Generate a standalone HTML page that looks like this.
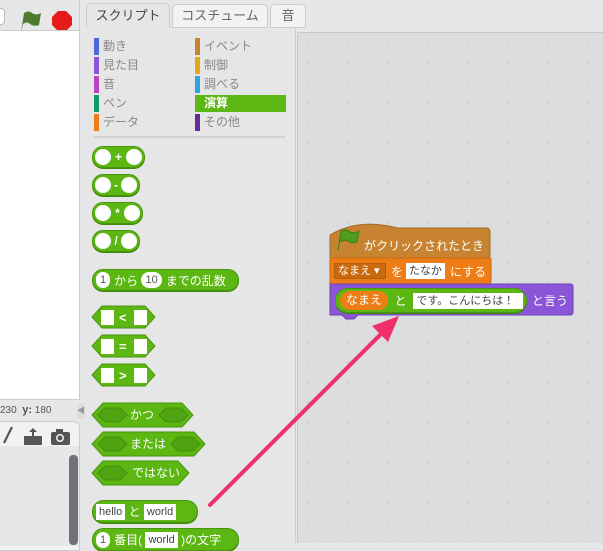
<!DOCTYPE html>
<html><head><meta charset="utf-8"><style>
*{margin:0;padding:0;box-sizing:border-box}
body{width:603px;height:543px;overflow:hidden;background:#e6e7e8;position:relative;font-family:"Liberation Sans","Noto Sans CJK JP",sans-serif}
.a{position:absolute}
.cat{position:absolute;font-size:12px;color:#888;height:17px;line-height:17px;padding-left:9px}
.cat i{position:absolute;left:0;top:0;width:5px;height:17px}
.rep{position:absolute;background:#5cb712;border:1px solid #4a9510;border-radius:12px;color:#fff;font-size:12px;display:flex;align-items:center;padding:0 3px;box-shadow:0 1px 0 #3f8a0e;white-space:nowrap}
.rep>span{flex-shrink:0}
.sm{padding:0 2px}
.c{width:16px;height:16px;border-radius:8px;background:#fff;display:inline-block}
.op{display:inline-block;width:14px;text-align:center;font-weight:bold}
.num{background:#fff;color:#555;border-radius:8px;height:16px;line-height:16px;padding:0 4px;font-size:11px;margin-right:4px}
.box{background:#fff;color:#444;height:16px;line-height:16px;padding:0 3px;font-size:11px;white-space:nowrap}
</style></head><body>
<div class="a" style="left:0;top:0;width:80px;height:30px;background:#e6e7e8;border-right:1px solid #ccc"></div>
<div class="a" style="left:0;top:8px;width:5px;height:17px;border:1px solid #bbb;border-left:none;border-radius:0 4px 4px 0;background:#fff"></div>
<svg class="a" style="left:18px;top:9px" width="24" height="24" viewBox="0 0 24 22"><path d="M3 22 L6 3 Q11 0 14 3 Q18 6 23 3 L21 15 Q16 17 12 14 Q9 11 5 14 L3 22Z" fill="#4e7c2e"/></svg>
<svg class="a" style="left:51px;top:10px" width="22" height="22"><polygon points="7,1 15,1 21,7 21,15 15,21 7,21 1,15 1,7" fill="#e61a1a"/></svg>
<div class="a" style="left:0;top:30px;width:80px;height:370px;background:#fff;border:1px solid #ccc;border-left:none"></div>
<div class="a" style="left:0;top:404px;font-size:10px;color:#555">230 &nbsp;<b style="font-size:11px">y:</b> 180</div>
<div class="a" style="left:77px;top:403px;width:8px;height:16px;background:#ddd;border-radius:3px;color:#999;font-size:8px;line-height:16px">◀</div>
<div class="a" style="left:0;top:421px;width:80px;height:130px;background:#f2f2f2;border:1px solid #ccc;border-left:none;border-radius:0 6px 0 0"></div>
<div class="a" style="left:0;top:446px;width:79px;height:100px;background:#e6e7e8"></div>
<svg class="a" style="left:0;top:424px" width="80" height="22"><path d="M4 19 L12 3" stroke="#555" stroke-width="2.2"/><rect x="24" y="12" width="18" height="9" fill="#555"/><path d="M33 4 l-4 4 h3 v5 h2 v-5 h3z" fill="#555"/><rect x="51" y="8" width="19" height="13" rx="2" fill="#555"/><rect x="56" y="5" width="7" height="4" fill="#555"/><circle cx="60" cy="14" r="4" fill="#f2f2f2"/><circle cx="60" cy="14" r="2.5" fill="#555"/></svg>
<div class="a" style="left:69px;top:455px;width:9px;height:90px;background:#707174;border-radius:4px"></div>
<div class="a" style="left:86px;top:3px;width:84px;height:26px;background:#e6e6e6;border:1px solid #ccc;border-bottom:none;border-radius:5px 5px 0 0;font-size:13px;color:#444;text-align:center;line-height:24px">スクリプト</div>
<div class="a" style="left:172px;top:4px;width:96px;height:24px;background:#f2f2f2;border:1px solid #ccc;border-radius:5px 5px 0 0;font-size:13px;color:#666;text-align:center;line-height:22px">コスチューム</div>
<div class="a" style="left:270px;top:4px;width:36px;height:24px;background:#f2f2f2;border:1px solid #ccc;border-radius:5px 5px 0 0;font-size:13px;color:#666;text-align:center;line-height:22px">音</div>
<div class="a" style="left:85px;top:28px;width:211px;height:515px;background:#e6e6e6;border-right:1px solid #ccc"></div>
<div class="cat" style="left:94px;top:38px"><i style="background:#4a6cd4"></i>動き</div>
<div class="cat" style="left:94px;top:57px"><i style="background:#8a55d7"></i>見た目</div>
<div class="cat" style="left:94px;top:76px"><i style="background:#bb42c3"></i>音</div>
<div class="cat" style="left:94px;top:95px"><i style="background:#0e9a6c"></i>ペン</div>
<div class="cat" style="left:94px;top:114px"><i style="background:#ee7d16"></i>データ</div>
<div class="cat" style="left:195px;top:38px"><i style="background:#c88330"></i>イベント</div>
<div class="cat" style="left:195px;top:57px"><i style="background:#e1a91a"></i>制御</div>
<div class="cat" style="left:195px;top:76px"><i style="background:#2ca5e2"></i>調べる</div>
<div class="cat" style="left:195px;top:95px;width:91px;background:#5cb712;color:#fff;font-weight:bold"><i style="background:#5cb712"></i>演算</div>
<div class="cat" style="left:195px;top:114px"><i style="background:#632d99"></i>その他</div>
<div class="a" style="left:94px;top:136px;width:191px;height:2px;background:#d0d0d0"></div>
<div class="rep sm" style="left:92px;top:146px;height:22px"><span class="c"></span><span class="op" style="width:15px">+</span><span class="c"></span></div>
<div class="rep sm" style="left:92px;top:174px;height:22px"><span class="c"></span><span class="op" style="width:10px">-</span><span class="c"></span></div>
<div class="rep sm" style="left:92px;top:202px;height:22px"><span class="c"></span><span class="op" style="width:13px">*</span><span class="c"></span></div>
<div class="rep sm" style="left:92px;top:230px;height:22px"><span class="c"></span><span class="op" style="width:10px">/</span><span class="c"></span></div>
<div class="rep" style="left:92px;top:269px;width:147px;height:22px"><span class="num">1</span>から&nbsp;<span class="num">10</span>までの乱数</div>
<svg class="a" style="left:90px;top:300px" width="125" height="245">
<g fill="#5cb712" stroke="#4a9510">
<polygon points="2,17 12,6 55,6 65,17 55,28 12,28"/>
<polygon points="2,46 12,35 55,35 65,46 55,57 12,57"/>
<polygon points="2,75 12,64 55,64 65,75 55,86 12,86"/>
<polygon points="2,115 13,103 92,103 103,115 92,127 13,127"/>
<polygon points="2,144 13,132 104,132 115,144 104,156 13,156"/>
<polygon points="2,173 13,161 88,161 99,173 88,185 13,185"/>
</g>
<g fill="#fff"><rect x="11" y="10" width="13" height="15"/><rect x="44" y="10" width="13" height="15"/>
<rect x="11" y="39" width="13" height="15"/><rect x="44" y="39" width="13" height="15"/>
<rect x="11" y="68" width="13" height="15"/><rect x="44" y="68" width="13" height="15"/></g>
<g fill="#4fa311" stroke="#43900e"><polygon points="8,115 15,108 30,108 37,115 30,122 15,122"/><polygon points="69,115 76,108 91,108 98,115 91,122 76,122"/>
<polygon points="8,144 15,137 30,137 37,144 30,151 15,151"/><polygon points="81,144 88,137 103,137 110,144 103,151 88,151"/>
<polygon points="8,173 15,166 30,166 37,173 30,180 15,180"/></g>
<g fill="#fff" font-size="13" font-weight="bold" font-family="Liberation Sans"><text x="29" y="22">&lt;</text><text x="29" y="51">=</text><text x="29" y="80">&gt;</text></g>
<g fill="#fff" font-size="12" font-family="Liberation Sans,Noto Sans CJK JP"><text x="40" y="119">かつ</text><text x="40" y="148">または</text><text x="42" y="177">ではない</text></g>
</svg>
<div class="rep" style="left:92px;top:500px;width:106px;height:23px"><span class="box">hello</span>&nbsp;と&nbsp;<span class="box">world</span></div>
<div class="rep" style="left:92px;top:528px;width:147px;height:23px"><span class="num">1</span>番目(&nbsp;<span class="box">world</span>&nbsp;)の文字</div>
<div class="a" style="left:297px;top:32px;width:306px;height:511px;background-color:#dcdddf;background-image:radial-gradient(circle,#cfd0d2 1px,transparent 1.5px);background-size:20px 20px;border-left:1px solid #c8c8c8;border-top:1px solid #c8c8c8"></div>
<svg class="a" style="left:328px;top:218px" width="250" height="104">
<path d="M2 17 Q30 0 70 10 L158 10 Q162 10 162 14 L162 37 Q162 40 158 40 L2 40Z" fill="#c88330" stroke="#a56a25"/>
<path d="M2 40 L163 40 L163 63 Q163 66 160 66 L2 66Z" fill="#ee7d16" stroke="#c96a10"/>
<path d="M2 66 L243 66 Q245 66 245 69 L245 94 Q245 97 242 97 L30 97 L26 101 L18 101 L14 97 L2 97Z" fill="#8a55d7" stroke="#6d42b0"/>
<path d="M10 32 L13 13 Q18 10 22 14 Q26 16 31 13 L29 24 Q24 26 20 23 Q17 21 12 24" fill="#4e9d1c" stroke="#3d7d14"/>
</svg>
<div class="a" style="left:364px;top:237px;font-size:12px;color:#fff">がクリックされたとき</div>
<div class="a" style="left:334px;top:263px;width:52px;height:16px;background:#c96a10;border:1px solid #b05d0c;color:#fff;font-size:11px;line-height:14px;padding-left:3px;white-space:nowrap">なまえ ▾</div>
<div class="a" style="left:391px;top:263px;font-size:12px;color:#fff">を</div>
<div class="a box" style="left:406px;top:263px">たなか</div>
<div class="a" style="left:450px;top:263px;font-size:12px;color:#fff">にする</div>
<div class="rep" style="left:335px;top:288px;width:192px;height:25px;border-radius:13px;padding:0 4px"><span style="background:#ee7d16;border-radius:10px;padding:0 6px;height:19px;line-height:19px;font-size:12px">なまえ</span>&nbsp;&nbsp;と&nbsp;&nbsp;<span class="box" style="width:110px">です。こんにちは！</span></div>
<div class="a" style="left:532px;top:292px;font-size:12px;color:#fff">と言う</div>
<svg class="a" style="left:0;top:0" width="603" height="543"><line x1="210" y1="505" x2="385" y2="330" stroke="#f0306a" stroke-width="4" stroke-linecap="round"/><polygon points="399,316 372,326 388,342" fill="#f0306a"/></svg>
</body></html>
